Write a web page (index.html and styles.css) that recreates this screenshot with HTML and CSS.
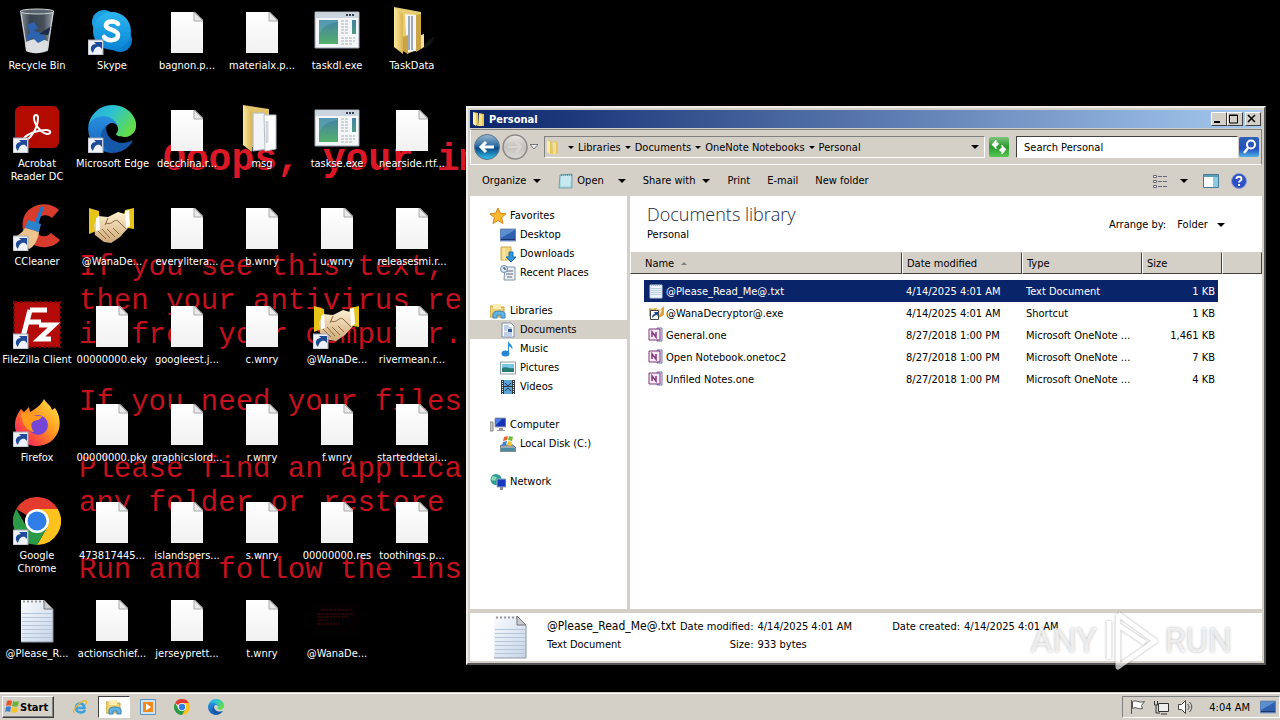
FILE: index.html
```
<!DOCTYPE html>
<html lang="en">
<head>
    <meta charset="UTF-8">
    <meta name="viewport" content="width=device-width, initial-scale=1.0">
    <title>Personal</title>
    <link rel="stylesheet" href="styles.css">
</head>
<body>
    <!-- Icon sprite -->
    <svg class="sprite" aria-hidden="true">
        <defs>
            <linearGradient id="gPage" x1="0" y1="0" x2="0" y2="1"><stop offset="0" stop-color="#fff"/><stop offset="1" stop-color="#f1f1f1"/></linearGradient>
            <linearGradient id="gNote" x1="0" y1="0" x2="1" y2="1"><stop offset="0" stop-color="#fafcff"/><stop offset="1" stop-color="#c6d3e6"/></linearGradient>
            <linearGradient id="gSkype" x1="0" y1="0" x2="0" y2="1"><stop offset="0" stop-color="#2cb6ee"/><stop offset="1" stop-color="#0a84d6"/></linearGradient>
            <linearGradient id="gEdgeTop" x1="0" y1="0" x2="1" y2="0.5"><stop offset="0" stop-color="#2ba5e0"/><stop offset="0.5" stop-color="#2cc3cf"/><stop offset="1" stop-color="#62dc4c"/></linearGradient>
            <linearGradient id="gEdgeLow" x1="0" y1="0" x2="0" y2="1"><stop offset="0" stop-color="#2a92e2"/><stop offset="1" stop-color="#1560b8"/></linearGradient>
            <linearGradient id="gFox" x1="1" y1="0" x2="0" y2="1"><stop offset="0" stop-color="#fff14a"/><stop offset="0.45" stop-color="#ff9320"/><stop offset="0.75" stop-color="#ff4046"/><stop offset="1" stop-color="#e3128c"/></linearGradient>
            <linearGradient id="gFolder" x1="0" y1="0" x2="1" y2="0"><stop offset="0" stop-color="#fbeaa0"/><stop offset="1" stop-color="#d9b451"/></linearGradient>
            <linearGradient id="gApp" x1="0" y1="0" x2="0" y2="1"><stop offset="0" stop-color="#4280a8"/><stop offset="1" stop-color="#55b06a"/></linearGradient>
            <linearGradient id="gBin" x1="0" y1="0" x2="1" y2="0"><stop offset="0" stop-color="#8d959c"/><stop offset="0.3" stop-color="#39434e"/><stop offset="0.7" stop-color="#46505b"/><stop offset="1" stop-color="#a5adb3"/></linearGradient>
            <linearGradient id="gNav" x1="0" y1="0" x2="0" y2="1"><stop offset="0" stop-color="#9bb9cf"/><stop offset="0.45" stop-color="#2b6da5"/><stop offset="0.55" stop-color="#0a4a86"/><stop offset="1" stop-color="#35c4ee"/></linearGradient>
            <linearGradient id="gNavOff" x1="0" y1="0" x2="0" y2="1"><stop offset="0" stop-color="#e8e6e2"/><stop offset="0.5" stop-color="#c4c1bc"/><stop offset="1" stop-color="#dedcd8"/></linearGradient>
            <linearGradient id="gHand" x1="0" y1="0" x2="0" y2="1"><stop offset="0" stop-color="#fdf0d0"/><stop offset="1" stop-color="#cfa878"/></linearGradient>
            <linearGradient id="gBlue" x1="0" y1="0" x2="0" y2="1"><stop offset="0" stop-color="#2e62b4"/><stop offset="0.6" stop-color="#2350c0"/><stop offset="1" stop-color="#4fb2e6"/></linearGradient>
            <linearGradient id="gGreen" x1="0" y1="0" x2="0" y2="1"><stop offset="0" stop-color="#7cc67a"/><stop offset="0.5" stop-color="#2a9a30"/><stop offset="1" stop-color="#56c850"/></linearGradient>
        </defs>
        <symbol id="file" viewBox="0 0 48 48">
            <path d="M8 5h24l8 8v33H8z" fill="url(#gPage)"/>
            <path d="M31 5v9h9z" fill="#e9e9e9" stroke="#a9a9a9"/>
        </symbol>
        <symbol id="note" viewBox="0 0 48 48">
            <path d="M8 5h23l9 9v33H8z" fill="url(#gNote)"/>
            <path d="M9 18.500h30M9 22.500h30M9 26.500h30M9 30.500h30M9 34.500h30M9 38.500h30M9 42.500h30" stroke="#b3c6dc"/>
            <path d="M10 6.500h22" stroke="#999" stroke-width="2" stroke-dasharray="2 2"/>
            <path d="M31 5v9h9z" fill="#c8ccd2" stroke="#777"/>
            <path d="M8 47h32V14" fill="none" stroke="#8d97a5"/>
        </symbol>
        <symbol id="link" viewBox="0 0 48 48">
            <path d="M0 33h15v15H0z" fill="#eef2f8" stroke="#a3a9b4"/>
            <path d="M5 46c-4-4-2-9 3-9L6 35h8v7l-2-2c-4-1-6 2-7 6z" fill="#1d4b98"/>
        </symbol>
        <symbol id="bin" viewBox="0 0 48 48">
            <path d="M7 4h34l-6 40c-6 3-16 3-22 0z" fill="url(#gBin)"/>
            <path d="M12 36c5-5 18-5 24-1l-1 8c-6 4-16 4-22 1z" fill="#dcdedf"/>
            <path d="M14 18l7-3 4 6-4 3 8 2 4 6-8 4-5-5-5 3-2-5 4-3z" fill="#2d62b0"/>
            <path d="M26 27l14-9-5 10z" fill="#1a2a48"/>
            <ellipse cx="24" cy="4.500" rx="17" ry="2.500" fill="#5c656d" stroke="#cfd4d8"/>
            <path d="M8 6l6 38M40 6l-6 38" stroke="#d5d9dc" fill="none"/>
        </symbol>
        <symbol id="skype" viewBox="0 0 48 48">
            <circle cx="16" cy="15" r="12" fill="#1d9fe4"/><circle cx="32" cy="33" r="12" fill="#0a7fd0"/>
            <circle cx="24" cy="24" r="19" fill="url(#gSkype)"/>
            <path d="M30 17c-2-3-11-4-12 1s12 4 12 10-10 7-14 2" fill="none" stroke="#fff" stroke-width="4.500" stroke-linecap="round"/>
        </symbol>
        <symbol id="edge" viewBox="4 5 256 256">
            <path d="M235.700 195.500a94 94 0 0 1-10.500 4.700 102 102 0 0 1-35.900 6.500c-47.300 0-88.500-32.600-88.500-74.300A31.500 31.500 0 0 1 117.100 105c-42.800 1.800-53.800 46.400-53.800 72.500 0 73.900 68 81.400 82.800 81.400 7.900 0 19.800-2.300 27-4.600l1.300-.4a128 128 0 0 0 66.600-52.800 4 4 0 0 0-5.300-5.600z" fill="#1557a8"/>
            <path d="M110.300 246.300A79 79 0 0 1 87.600 225a80.700 80.700 0 0 1 29.500-120c3.100-1.500 8.500-4.100 15.500-4a32.400 32.400 0 0 1 25.700 13 31.900 31.900 0 0 1 6.400 18.700c0-.2 24.500-79.600-80-79.600-43.900 0-80 41.700-80 78.200a130 130 0 0 0 12.100 56 128 128 0 0 0 156.400 67.100 75.600 75.600 0 0 1-62.800-8z" fill="url(#gEdgeLow)"/>
            <path d="M156.900 153.800c-.8 1-3.300 2.500-3.300 5.600 0 2.600 1.700 5.100 4.700 7.200 14.400 10 41.500 8.700 41.600 8.700a59.600 59.600 0 0 0 30.300-8.300 61.400 61.400 0 0 0 30.400-52.900c.3-22.400-8-37.300-11.300-43.900C228.100 28.800 182.400 5 132.600 5a128 128 0 0 0-128 126.200c.5-36.500 36.800-66 80-66 3.500 0 23.500.3 42 10 16.300 8.600 24.900 19 30.900 29.200 6.200 10.700 7.300 24.200 7.300 29.500s-2.700 13.300-7.900 19.900z" fill="url(#gEdgeTop)"/>
        </symbol>
        <symbol id="acrobat" viewBox="0 0 48 48">
            <rect x="2" y="1" width="44" height="42" rx="6" fill="#b30b00"/>
            <path d="M12 35c5 0 13-12 13-22 0-4-4-4-4 0 0 6 7 15 13 16 5 0 4-4-1-4-7 0-17 3-21 7-2 2-2 3 0 3z" fill="none" stroke="#fff" stroke-width="2"/>
        </symbol>
        <symbol id="ccleaner" viewBox="0 0 48 48">
            <path d="M46 7C36-3 14 0 10 17c-3 18 10 29 24 27 6-1 10-3 13-7l-9-7c-7 7-17 2-16-8 1-9 11-13 17-7z" fill="#d63b2c"/>
            <path d="M28 3l3 1-6 18-4-1z" fill="#1f78c8"/><path d="M15 17l13 4-2 8-14-4z" fill="#2a83cc"/>
            <path d="M12 25l14 4c-1 8-5 15-10 17L0 34c5-1 9-4 12-9z" fill="#ecc58e"/>
        </symbol>
        <symbol id="filezilla" viewBox="0 0 48 48">
            <path d="M1 1h46v45H1z" fill="#b50a0a" stroke="#7a0505" stroke-width="2" stroke-dasharray="3 2"/>
            <path d="M17 9h17M15 21h13M17 9l-7 27M26 24h15L26 38h12" fill="none" stroke="#fff" stroke-width="5"/>
        </symbol>
        <symbol id="firefox" viewBox="0 0 48 48">
            <path d="M31 0c2 4 7 6 8 11l3-2c5 7 6 17 3 24-4 9-12 14-21 14C11 47 2 38 2 26c0-7 3-12 6-16l3 3 5-5 1 5C26 8 29 4 31 0z" fill="url(#gFox)"/>
            <circle cx="25" cy="26" r="10" fill="#7446d8"/><path d="M8 15c6-3 11-1 14 2h7c-1 4-5 4-8 5-4 2-3 7 0 11-7-1-12-7-13-18z" fill="#ff9a1e"/>
        </symbol>
        <symbol id="chrome" viewBox="0 0 48 48">
            <path d="M24 24L3.200 12a24 24 0 0 1 41.600 0z" fill="#e33b2e"/>
            <path d="M24 12h20.800A24 24 0 0 1 24 48l10.400-18z" fill="#fcc31e"/>
            <path d="M3.200 12A24 24 0 0 0 24 48l10.400-18L24 24 13.600 30z" fill="#2b9a47"/>
            <circle cx="24" cy="24" r="12" fill="#fff"/><circle cx="24" cy="24" r="9.500" fill="#2f7de6"/>
        </symbol>
        <symbol id="hands" viewBox="0 0 48 48">
            <path d="M1 5l10 3 1 18-6 3-5 2zM46 5l-9 2-3 15 6 3 6 1z" fill="#e6c418"/>
            <path d="M10 13l10 1 10-5 7 2 3 14-8 9-9 6-7-1-9-7-1-10z" fill="url(#gHand)"/>
            <path d="M37 8l4-1 1 16-4 2zM8 15l3-1 1 13-4 1z" fill="#fff"/>
            <path d="M18 20c6 3 8-5 12-2l8 8M20 15l-3 7M10 28l8 8M14 26l8 9M19 26l8 8M25 25l6 6" fill="none" stroke="#8a6840"/>
        </symbol>
        <symbol id="app" viewBox="0 0 48 48">
            <path d="M2 5h44v36H2z" fill="#f4f6f8" stroke="#9aa6b2"/><path d="M3 6h42v5H3z" fill="#cbd5df"/>
            <path d="M33 8h9" stroke="#34424f" stroke-width="2" stroke-dasharray="2 1"/>
            <path d="M6 13h19v24H6zM39 13h4v14h-4z" fill="url(#gApp)"/><path d="M6 28C9 19 17 16 25 15v-2H6z" fill="#6ab0c0" opacity=".5"/>
            <path d="M28 14h8M28 17h8M28 20h8M28 23h8M28 26h8M28 31h14M28 34h14M28 37h12" stroke="#a9b0b6" stroke-dasharray="3 1"/>
        </symbol>
        <symbol id="folderFull" viewBox="0 0 48 48">
            <path d="M6 0l27 5v36l-14 6z" fill="#e8cd75"/><path d="M17 7l11 1v36l-9 1z" fill="#f6f6f6"/><path d="M21 9v34M24 9v34" stroke="#9cabc0" stroke-width="2"/>
            <path d="M6 0l9 7v40L6 40z" fill="url(#gFolder)"/><path d="M15 30l5-2v19l-5-3zM28 8l5-1v35l-5 3z" fill="#caa447"/><path d="M33 28l3-1v13l-3 2z" fill="#f4dfa0"/>
            <path d="M36 37l11-8-4 8-7 5z" fill="#222" opacity=".6"/>
        </symbol>
        <symbol id="folderDocs" viewBox="0 0 48 48">
            <path d="M5 0l26 4v38H14z" fill="#e2c56b"/><path d="M15 8h11l4 5v31l-15 2z" fill="#f2f4f8" stroke="#aab2c0"/>
            <path d="M26 10h12v34l-11 2z" fill="#fff" stroke="#b7bec9"/><path d="M29 16v22" stroke="#d2d7de" stroke-width="3"/>
            <path d="M5 0l9 7v40l-9-7z" fill="url(#gFolder)"/>
        </symbol>
        <symbol id="bmp" viewBox="0 0 48 48">
            <path d="M0 8h48v31H0z" fill="#020000"/>
            <path d="M8 15h30M4 19h36M4 22h32M4 25h10M4 29h24" stroke="#4a060a" stroke-dasharray="4 1 2 1"/>
        </symbol>

        <!-- 16px set -->
        <symbol id="folder" viewBox="0 0 16 16">
            <path d="M2 1l5 1v13l-5-2zM8 2l5 1v12H7z" fill="#e6c75a"/><path d="M2 1l3 2v12l-3-2z" fill="#fbeca8"/><path d="M8 3l3 1v11H8z" fill="#f8e08a"/>
        </symbol>
        <symbol id="star" viewBox="0 0 16 16"><path d="M8 0l2.400 5.300 5.600.5-4.300 3.700 1.300 6L8 12.400 3 15.500l1.300-6L0 5.800l5.600-.5z" fill="#f8b830" stroke="#d98418"/></symbol>
        <symbol id="desk" viewBox="0 0 16 16"><path d="M0 2h16v12H0z" fill="#2f60b0" stroke="#8ba0bd"/><path d="M1 3h14L1 11z" fill="#5b8fd0"/><path d="M1 12h14v1H1z" fill="#17356f"/></symbol>
        <symbol id="down" viewBox="0 0 16 16"><path d="M1 1h10v13H1z" fill="#f3d984" stroke="#c9a348"/><path d="M4 2v13" stroke="#fff3bd"/><path d="M9 6h4v5h3l-5 5-5-5h3z" fill="#3296de" stroke="#1b6db0"/></symbol>
        <symbol id="recent" viewBox="0 0 16 16"><path d="M5 2h10v13H4z" fill="#e9edf1" stroke="#8295a8"/><path d="M6 6h7M6 9h7M7 12h5" stroke="#668"/><circle cx="4" cy="4" r="3.500" fill="#dbeaf8" stroke="#6b88a5"/><path d="M4 2v2h2" fill="none" stroke="#334"/></symbol>
        <symbol id="libs" viewBox="0 0 16 16"><path d="M0 3h6l1 1h7v10H0z" fill="#f0d070" stroke="#c5a045"/><path d="M3 1h8v5H3z" fill="#fbeeb0"/><path d="M3 15v-4c0-4 12-4 12 0v4h-4v-3H7v3z" fill="#62b4e2" stroke="#3885b8"/></symbol>
        <symbol id="doc" viewBox="0 0 16 16"><path d="M2 1h9l3 3v11H2z" fill="#fff" stroke="#7b8eaa"/><path d="M4 4h5M4 6h8M4 8h3M4 11h8M4 13h8" stroke="#7aa0d0"/><path d="M8 7h4v3H8z" fill="#315d9c"/></symbol>
        <symbol id="music" viewBox="0 0 16 16"><ellipse cx="5.500" cy="12.500" rx="4" ry="3" fill="#2586d2"/><path d="M8 13V0c1 3 6 4 4 9 0-3-2-3-3-4v8z" fill="#2a90da"/></symbol>
        <symbol id="pic" viewBox="0 0 16 16"><path d="M.5 2h15v12H.5z" fill="#fff" stroke="#8c9cac"/><path d="M2 4h12v8H2z" fill="#7dc4ea"/><path d="M2 8c4-2 7 1 12 0v4H2z" fill="#287c70"/></symbol>
        <symbol id="video" viewBox="0 0 16 16"><path d="M1 1h14v14H1z" fill="#303840"/><path d="M4 1h8v6H4zM4 8h8v7H4z" fill="#5aa5d8"/><path d="M5 4l3 3 3-3M5 12l3-3 3 3" stroke="#235" fill="none"/><path d="M2.500 2v13M13.500 2v13" stroke="#fff" stroke-dasharray="1 1"/></symbol>
        <symbol id="pc" viewBox="0 0 16 16"><path d="M5 1h11v9H5z" fill="#1733b4" stroke="#a5acb5"/><path d="M6 2h6L6 8z" fill="#4f7de8"/><path d="M9 11h4v2h2v1H7v-1h2z" fill="#999"/><path d="M0 5h3v9H0z" fill="#c7c7c4" stroke="#888"/></symbol>
        <symbol id="disk" viewBox="0 0 16 16"><path d="M1 9h12l3 3v4H0v-5z" fill="#9da9ae" stroke="#67767e"/><path d="M1 12h14v3H1z" fill="#4a8ba0"/><path d="M4 1l4-1-1 4-4 1z" fill="#e8622a"/><path d="M9 0l4 1-1 4-4-1z" fill="#74b83a"/><path d="M3 6l4-1-1 4-4 1z" fill="#3d82d6"/><path d="M8 5l4 1-1 4-4-1z" fill="#f4c430"/></symbol>
        <symbol id="net" viewBox="0 0 16 16"><circle cx="6" cy="5.500" r="5.500" fill="#289d95"/><path d="M2 2l5 1-2 4-4-1z" fill="#8ad4b8"/><path d="M7 5h9v8H7z" fill="#1738c0" stroke="#9ab"/><path d="M10 13h3v3h-3z" fill="#889"/></symbol>
        <symbol id="one" viewBox="0 0 16 16"><path d="M9 1h5v13H9z" fill="#e8e1f2" stroke="#6e7fb0"/><path d="M1 2h11v11H1z" fill="#f6e9f6" stroke="#80397b"/><path d="M4 10V5l4 5V5" fill="none" stroke="#80397b" stroke-width="1.500"/></symbol>
        <symbol id="pad" viewBox="0 0 16 16"><path d="M2 2l12-1v14H1z" fill="#a9dbe4" stroke="#7b9fa8"/><path d="M3 4h10M3 6h10M3 8h10M3 10h9M3 12h9" stroke="#e5f6f8"/><path d="M3 2h11" stroke="#456" stroke-dasharray="1 1"/></symbol>
        <symbol id="padfile" viewBox="0 0 16 16"><path d="M2 2h12v13H2z" fill="#eef5fb" stroke="#b9c8d6"/><path d="M3 5.500h10M3 7.500h10M3 9.500h10M3 11.500h10" stroke="#b4cbe0"/><path d="M3 2h10" stroke="#7b8a99" stroke-dasharray="1 1"/></symbol>
        <symbol id="refresh" viewBox="0 0 20 20"><rect width="20" height="20" rx="2" fill="url(#gGreen)"/><path d="M3 8l4-5v3h2v2H7v4M17 12l-4 5v-3h-2v-2h2V8" fill="#fff" stroke="#fff"/></symbol>
        <symbol id="find" viewBox="0 0 20 20"><rect width="20" height="20" rx="2" fill="url(#gBlue)"/><circle cx="12" cy="7.500" r="4" fill="none" stroke="#fff" stroke-width="2"/><path d="M9 11l-4 5" stroke="#fff" stroke-width="2.500"/></symbol>
        <symbol id="view" viewBox="0 0 16 16"><path d="M1.500 2.500h3v2h-3zM1.500 7.500h3v2h-3zM1.500 12.500h3v2h-3z" fill="#fff" stroke="#667"/><path d="M6 3.500h9M6 8.500h9M6 13.500h9" stroke="#667" stroke-dasharray="4 1"/></symbol>
        <symbol id="pane" viewBox="0 0 16 16"><path d="M.5 1.500h15v13H.5z" fill="#fff" stroke="#477c96"/><path d="M1 2h14v2H1z" fill="#5d9db8"/><path d="M10 4h5v10h-5z" fill="#8ecbe0"/></symbol>
        <symbol id="help" viewBox="0 0 16 16"><circle cx="8" cy="8" r="7.500" fill="#2d50c4" stroke="#8b9ed0"/><path d="M5.500 6c0-3 5-3 5 0 0 2-2.500 1.500-2.500 3.500M8 11v2" stroke="#fff" stroke-width="2" fill="none"/></symbol>
        <symbol id="ie" viewBox="0 0 16 16"><path d="M13 11c-2 4-9 3-9-2.500S12 3 12.500 9H5" fill="none" stroke="#3ba1e0" stroke-width="2.500"/><path d="M2 14C-1 12 10 0 14 2c1 1 0 3-1 4" fill="none" stroke="#e6b830" stroke-width="1.300"/></symbol>
        <symbol id="wmp" viewBox="0 0 16 16"><path d="M.5.5h15v15H.5z" fill="#cfe3f4" stroke="#5b94c4"/><path d="M3 3h10v10H3z" fill="#f08a1c"/><path d="M6 4.500L11 8l-5 3.500z" fill="#fff"/></symbol>
        <symbol id="flag" viewBox="0 0 16 16"><path d="M2.500 1v14" stroke="#555"/><path d="M3.500 2.500c4-2 6 2 12 0l-3 4 1 3c-5 1-6-2-10 0z" fill="#fff" stroke="#555"/></symbol>
        <symbol id="lan" viewBox="0 0 16 16"><path d="M5.500 4.500h10v8h-10z" fill="#eee" stroke="#333"/><path d="M8 15h6M1.500 2v4h3V2M3 6v8h4" fill="none" stroke="#333"/></symbol>
        <symbol id="sound" viewBox="0 0 16 16"><path d="M1.500 5.500h3l4-4v13l-4-4h-3z" fill="#fff" stroke="#444"/><path d="M10.500 5c2 2 2 4 0 6M12.500 3c3 3 3 7 0 10" fill="none" stroke="#444"/></symbol>
        <symbol id="winlogo" viewBox="0 0 16 16"><path d="M3 2c2-1 3-1 5 0L7 7c-2-1-3-1-5 0z" fill="#e8532a"/><path d="M9 2c2 1 4 1 6 0l-1 5c-2 1-4 1-6 0z" fill="#6db33a"/><path d="M2 8c2-1 3-1 5 0l-1 5c-2-1-4-1-5 0z" fill="#3a7fd0"/><path d="M8 8c2 1 4 1 6 0l-1 5c-2 1-4 1-6 0z" fill="#f5c32a"/></symbol>
    </svg>

    <main class="desktop">
        <div class="wallpaper">
            <h1>Ooops, your im</h1>
            <p>If you see this text,<br>then your antivirus re<br>it from your computer.</p>
            <p>If you need your files</p>
            <p>Please find an applica<br>any folder or restore</p>
            <p>Run and follow the ins</p>
        </div>

        <div class="icons">
            <button><svg><use href="#bin"/></svg>Recycle Bin</button>
            <button><svg><use href="#acrobat"/><use href="#link"/></svg>Acrobat<br>Reader DC</button>
            <button><svg><use href="#ccleaner"/><use href="#link"/></svg>CCleaner</button>
            <button><svg><use href="#filezilla"/><use href="#link"/></svg>FileZilla Client</button>
            <button><svg><use href="#firefox"/><use href="#link"/></svg>Firefox</button>
            <button><svg><use href="#chrome"/><use href="#link"/></svg>Google<br>Chrome</button>
            <button><svg><use href="#note"/></svg>@Please_R...</button>

            <button><svg><use href="#skype"/><use href="#link"/></svg>Skype</button>
            <button><svg><use href="#edge"/><use href="#link"/></svg>Microsoft Edge</button>
            <button><svg><use href="#hands"/></svg>@WanaDe...</button>
            <button><svg><use href="#file"/></svg>00000000.eky</button>
            <button><svg><use href="#file"/></svg>00000000.pky</button>
            <button><svg><use href="#file"/></svg>473817445...</button>
            <button><svg><use href="#file"/></svg>actionschief...</button>

            <button><svg><use href="#file"/></svg>bagnon.p...</button>
            <button><svg><use href="#file"/></svg>decchina.r...</button>
            <button><svg><use href="#file"/></svg>everylitera...</button>
            <button><svg><use href="#file"/></svg>googleest.j...</button>
            <button><svg><use href="#file"/></svg>graphicslord...</button>
            <button><svg><use href="#file"/></svg>islandspers...</button>
            <button><svg><use href="#file"/></svg>jerseyprett...</button>

            <button><svg><use href="#file"/></svg>materialx.p...</button>
            <button><svg><use href="#folderDocs"/></svg>msg</button>
            <button><svg><use href="#file"/></svg>b.wnry</button>
            <button><svg><use href="#file"/></svg>c.wnry</button>
            <button><svg><use href="#file"/></svg>r.wnry</button>
            <button><svg><use href="#file"/></svg>s.wnry</button>
            <button><svg><use href="#file"/></svg>t.wnry</button>

            <button><svg><use href="#app"/></svg>taskdl.exe</button>
            <button><svg><use href="#app"/></svg>taskse.exe</button>
            <button><svg><use href="#file"/></svg>u.wnry</button>
            <button><svg><use href="#hands"/><use href="#link"/></svg>@WanaDe...</button>
            <button><svg><use href="#file"/></svg>f.wnry</button>
            <button><svg><use href="#file"/></svg>00000000.res</button>
            <button><svg><use href="#bmp"/></svg>@WanaDe...</button>

            <button><svg><use href="#folderFull"/></svg>TaskData</button>
            <button><svg><use href="#file"/></svg>nearside.rtf...</button>
            <button><svg><use href="#file"/></svg>releasesmi.r...</button>
            <button><svg><use href="#file"/></svg>rivermean.r...</button>
            <button><svg><use href="#file"/></svg>starteddetai...</button>
            <button><svg><use href="#file"/></svg>toothings.p...</button>
        </div>

        <section class="window">
            <header class="titlebar">
                <svg class="i16"><use href="#folder"/></svg>
                <span class="title">Personal</span>
                <button class="caption" aria-label="Minimize"><svg viewBox="0 0 12 10"><path d="M2 8h6" stroke="#000" stroke-width="2"/></svg></button>
                <button class="caption" aria-label="Maximize"><svg viewBox="0 0 12 10"><path d="M1.500 1h8v8h-8zM1 1.500h9" fill="none" stroke="#000"/></svg></button>
                <button class="caption close" aria-label="Close"><svg viewBox="0 0 12 10"><path d="M2 1l7 7M9 1L2 8" stroke="#000" stroke-width="1.500"/></svg></button>
            </header>

            <nav class="navbar">
                <div class="travel">
                    <button aria-label="Back"><svg viewBox="0 0 26 26"><circle cx="13" cy="13" r="12.500" fill="url(#gNav)" stroke="#5d7488"/><path d="M20 13H8M12 8l-5 5 5 5" fill="none" stroke="#fff" stroke-width="3"/></svg></button>
                    <button aria-label="Forward"><svg viewBox="0 0 26 26"><circle cx="13" cy="13" r="12" fill="url(#gNavOff)" stroke="#8c8a86" stroke-width="1.500"/><path d="M6 13h12M14 8l5 5-5 5" fill="none" stroke="#dad7d2" stroke-width="2"/></svg></button>
                    <button class="history" aria-label="Recent pages"><svg viewBox="0 0 8 6"><path d="M0 .5h8L4 5z" fill="#eee" stroke="#777"/></svg></button>
                </div>
                <div class="address">
                    <svg class="i16"><use href="#folder"/></svg>
                    <i class="caret"></i><button>Libraries</button>
                    <i class="caret"></i><button>Documents</button>
                    <i class="caret"></i><button>OneNote Notebooks</button>
                    <i class="caret"></i><button>Personal</button>
                    <i class="caret big end"></i>
                </div>
                <button class="go" aria-label="Refresh"><svg><use href="#refresh"/></svg></button>
                <input class="search" type="text" placeholder="Search Personal" aria-label="Search Personal">
                <button class="go find" aria-label="Search"><svg><use href="#find"/></svg></button>
            </nav>

            <div class="toolbar">
                <button>Organize <i class="caret big"></i></button>
                <button class="open"><svg class="i16"><use href="#pad"/></svg>Open <i class="caret big"></i></button>
                <button>Share with <i class="caret big"></i></button>
                <button>Print</button>
                <button>E-mail</button>
                <button>New folder</button>
                <div class="tools">
                    <button aria-label="Change view"><svg class="i16"><use href="#view"/></svg><i class="caret big"></i></button>
                    <button aria-label="Preview pane"><svg class="i16"><use href="#pane"/></svg></button>
                    <button aria-label="Help"><svg class="i16"><use href="#help"/></svg></button>
                </div>
            </div>

            <div class="content">
                <aside class="tree">
                    <div class="group">
                        <a href="#"><svg class="i16"><use href="#star"/></svg>Favorites</a>
                        <a href="#" class="child"><svg class="i16"><use href="#desk"/></svg>Desktop</a>
                        <a href="#" class="child"><svg class="i16"><use href="#down"/></svg>Downloads</a>
                        <a href="#" class="child"><svg class="i16"><use href="#recent"/></svg>Recent Places</a>
                    </div>
                    <div class="group">
                        <a href="#"><svg class="i16"><use href="#libs"/></svg>Libraries</a>
                        <a href="#" class="child current"><svg class="i16"><use href="#doc"/></svg>Documents</a>
                        <a href="#" class="child"><svg class="i16"><use href="#music"/></svg>Music</a>
                        <a href="#" class="child"><svg class="i16"><use href="#pic"/></svg>Pictures</a>
                        <a href="#" class="child"><svg class="i16"><use href="#video"/></svg>Videos</a>
                    </div>
                    <div class="group">
                        <a href="#"><svg class="i16"><use href="#pc"/></svg>Computer</a>
                        <a href="#" class="child"><svg class="i16"><use href="#disk"/></svg>Local Disk (C:)</a>
                    </div>
                    <div class="group">
                        <a href="#"><svg class="i16"><use href="#net"/></svg>Network</a>
                    </div>
                </aside>

                <div class="list">
                    <div class="library">
                        <div class="heading">
                            <h2>Documents library</h2>
                            <p>Personal</p>
                        </div>
                        <div class="arrange">Arrange by: <button>Folder <i class="caret big"></i></button></div>
                    </div>
                    <table>
                        <thead>
                            <tr><th class="name">Name <i class="sort"></i></th><th class="date">Date modified</th><th class="type">Type</th><th class="size">Size</th><th></th></tr>
                        </thead>
                        <tbody>
                            <tr class="selected"><td><span><svg class="i16"><use href="#padfile"/></svg>@Please_Read_Me@.txt</span></td><td>4/14/2025 4:01 AM</td><td>Text Document</td><td>1 KB</td><td></td></tr>
                            <tr><td><span><svg class="i16" viewBox="0 0 16 16"><path d="M1 3l4 1 3-1 4 2 4-4v9l-5 3-4 1-6-3z" fill="#dba63a"/><path d="M8 4l6 1-2 5-4-1z" fill="#f3dfb4"/><path d="M2.500 5.500h8v9h-8z" fill="#fff" stroke="#444"/><path d="M4 13c0-3 1-4 3-4L6 7h4v4l-1-1c-2 0-3 1-5 3z" fill="#1d4b98"/></svg>@WanaDecryptor@.exe</span></td><td>4/14/2025 4:01 AM</td><td>Shortcut</td><td>1 KB</td><td></td></tr>
                            <tr><td><span><svg class="i16"><use href="#one"/></svg>General.one</span></td><td>8/27/2018 1:00 PM</td><td>Microsoft OneNote ...</td><td>1,461 KB</td><td></td></tr>
                            <tr><td><span><svg class="i16"><use href="#one"/></svg>Open Notebook.onetoc2</span></td><td>8/27/2018 1:00 PM</td><td>Microsoft OneNote ...</td><td>7 KB</td><td></td></tr>
                            <tr><td><span><svg class="i16"><use href="#one"/></svg>Unfiled Notes.one</span></td><td>8/27/2018 1:00 PM</td><td>Microsoft OneNote ...</td><td>4 KB</td><td></td></tr>
                        </tbody>
                    </table>
                </div>
            </div>

            <footer class="details">
                <svg class="thumb"><use href="#note"/></svg>
                <div class="facts">
                    <span class="filename">@Please_Read_Me@.txt</span><span class="label">Date modified:</span><span>4/14/2025 4:01 AM</span><span class="label">Date created:</span><span>4/14/2025 4:01 AM</span>
                    <span>Text Document</span><span class="label">Size:</span><span>933 bytes</span>
                </div>
            </footer>
        </section>

        <div class="watermark">
            <span>ANY</span>
            <svg viewBox="0 0 56 62"><path d="M15 5l37 27-37 26V5M15 16l27 18M6 12v38" fill="none" stroke="#fff" stroke-width="5" stroke-linejoin="round"/></svg>
            <span>RUN</span>
        </div>
    </main>

    <footer class="taskbar">
        <button class="start"><svg><use href="#winlogo"/></svg>Start</button>
        <div class="tasks">
            <button aria-label="Internet Explorer"><svg><use href="#ie"/></svg></button>
            <button class="active" aria-label="Windows Explorer"><svg><use href="#libs"/></svg></button>
            <button aria-label="Media Player"><svg><use href="#wmp"/></svg></button>
            <button aria-label="Google Chrome"><svg><use href="#chrome"/></svg></button>
            <button aria-label="Microsoft Edge"><svg><use href="#edge"/></svg></button>
        </div>
        <div class="tray">
            <svg class="i16"><use href="#flag"/></svg>
            <svg class="i16"><use href="#lan"/></svg>
            <svg class="i16"><use href="#sound"/></svg>
            <time>4:04 AM</time>
            <svg class="i16"><use href="#desk"/></svg>
        </div>
    </footer>
</body>
</html>
```
FILE: styles.css
```
* {
    box-sizing: border-box;
}

body {
    margin: 0;
    height: 100vh;
    display: flex;
    flex-direction: column;
    overflow: hidden;
    background: #000;
    color: #000;
    font: 11px/13px Tahoma, "DejaVu Sans Condensed", "DejaVu Sans", sans-serif;
}

h1, h2, p {
    margin: 0;
    font-weight: normal;
}

button {
    padding: 0;
    border: none;
    background: none;
    color: inherit;
    font: inherit;
    white-space: nowrap;
}

svg {
    flex: none;
}

.sprite {
    position: absolute;
    width: 0;
    height: 0;
}

.i16 {
    width: 16px;
    height: 16px;
}

.caret {
    flex: none;
    border: 3px solid transparent;
    border-top-color: #000;
    border-bottom: none;
}

.caret.big {
    border-width: 4px 4px 0;
}

/* Desktop */
.desktop {
    position: relative;
    flex: 1;
    min-height: 0;
}

.wallpaper {
    position: absolute;
    top: 138px;
    left: 79px;
    color: #c4111d;
    font: 29px/34px "Courier New", "Liberation Mono", monospace;
    white-space: nowrap;
}

.wallpaper h1 {
    padding-left: 84px;
    margin-bottom: 69px;
    color: #dc1826;
    font-size: 38px;
    font-weight: bold;
    line-height: 44px;
}

.wallpaper p {
    margin-bottom: 33px;
}

.icons {
    position: relative;
    display: grid;
    grid-auto-flow: column;
    grid-template-rows: repeat(7, 98px);
    grid-auto-columns: 72px;
    column-gap: 3px;
    padding-left: 1px;
    color: #fff;
}

.icons button {
    align-self: start;
    padding-top: 7px;
    text-shadow: 1px 1px 1px #000;
}

.icons svg {
    display: block;
    width: 48px;
    height: 48px;
    margin: 0 auto 4px;
}

/* Explorer window */
.window {
    position: absolute;
    top: 106px;
    left: 466px;
    display: flex;
    flex-direction: column;
    width: 800px;
    height: 559px;
    padding: 2px;
    background: #d4d0c8;
    border: 2px solid;
    border-color: #efedea #555 #555 #efedea;
}

.titlebar {
    display: flex;
    align-items: center;
    height: 18px;
    padding: 0 1px;
    background: linear-gradient(to right, #0a246a, #a6caf0);
    color: #fff;
    font-weight: bold;
}

.title {
    flex: 1;
    padding-left: 2px;
}

.caption {
    width: 16px;
    height: 14px;
    background: #d4d0c8;
    border: 1px solid;
    border-color: #fff #404040 #404040 #fff;
}

.caption svg {
    display: block;
    width: 12px;
    height: 10px;
}

.caption.close {
    margin-left: 2px;
}

.navbar {
    display: flex;
    align-items: center;
    height: 36px;
    margin-top: 1px;
    padding: 0 2px 0 3px;
    border: 1px solid;
    border-color: #808080 #808080 #fff #fff;
}

.travel {
    display: flex;
    align-items: center;
    gap: 2px;
}

.travel svg {
    display: block;
    width: 26px;
    height: 26px;
}

.travel .history svg {
    width: 8px;
    height: 6px;
}

.history {
    margin-right: 6px;
}

.address {
    display: flex;
    flex: 1;
    align-items: center;
    gap: 4px;
    height: 22px;
    padding-right: 5px;
    border: 1px solid;
    border-color: #808080 #fff #fff #808080;
}

.address .i16 {
    margin-right: 3px;
}

.address .end {
    margin-left: auto;
}

.go {
    margin: 0 7px 0 4px;
}

.go.find {
    margin: 0 0 0 1px;
}

.go svg {
    display: block;
    width: 20px;
    height: 20px;
}

.search {
    width: 222px;
    height: 22px;
    padding: 0 7px;
    border: 1px solid;
    border-color: #404040 #fff #fff #404040;
    font: inherit;
}

.search::placeholder {
    color: #000;
}

.toolbar {
    display: flex;
    align-items: center;
    gap: 17px;
    height: 31px;
    padding: 0 15px 0 12px;
}

.toolbar button {
    display: flex;
    align-items: center;
}

.toolbar .caret {
    margin-left: 7px;
}

.toolbar .open .caret {
    margin-left: 14px;
}

.toolbar .i16 {
    margin-right: 3px;
}

.tools {
    display: flex;
    gap: 12px;
    margin-left: auto;
}

.tools .i16 {
    margin: 0;
}

.toolbar .tools .caret {
    margin: 0 3px 0 12px;
}

.content {
    display: flex;
    flex: 1;
    min-height: 0;
    background: #fff;
}

.tree {
    width: 160px;
    padding-top: 10px;
    border-right: 3px solid #d4d0c8;
}

.group {
    margin-bottom: 19px;
}

.tree a {
    display: flex;
    align-items: center;
    gap: 4px;
    height: 19px;
    padding-left: 20px;
    color: #000;
    text-decoration: none;
}

.tree a.child {
    padding-left: 30px;
}

.tree a.current {
    background: #d4d0c8;
}

.list {
    flex: 1;
}

.library {
    display: flex;
    justify-content: space-between;
    align-items: center;
    height: 56px;
    padding: 0 37px 0 17px;
}

.heading {
    padding-bottom: 6px;
}

.library h2 {
    margin-bottom: 2px;
    color: #1b2a3c;
    font: 300 18px/24px "Open Sans", sans-serif;
}

.arrange button {
    margin-left: 8px;
}

.arrange .caret {
    display: inline-block;
    margin-left: 6px;
    vertical-align: middle;
}

table {
    width: 100%;
    table-layout: fixed;
    border-collapse: separate;
    border-spacing: 0;
}

th {
    height: 22px;
    padding: 0 4px;
    background: #d4d0c8;
    border: 1px solid;
    border-color: #d4d0c8 #404040 #404040 #fff;
    font-weight: normal;
    text-align: left;
}

th.name {
    width: 272px;
    padding-left: 14px;
}

th.date, th.type {
    width: 120px;
}

th.size {
    width: 80px;
}

.sort {
    display: inline-block;
    margin-left: 4px;
    border: 3px solid transparent;
    border-top: none;
    border-bottom-color: #808080;
    vertical-align: middle;
}

tbody::before {
    content: "";
    display: block;
    height: 6px;
}

td {
    height: 22px;
    padding: 0;
    text-indent: 4px;
}

td:first-child {
    padding-left: 14px;
    background-clip: content-box;
    text-indent: 0;
}

td:nth-child(4) {
    padding-right: 4px;
    background-clip: content-box;
    text-align: right;
}

td:nth-child(4)::after {
    content: "";
    padding-left: 3px;
}

td span {
    display: flex;
    align-items: center;
    gap: 2px;
    height: 22px;
    padding-left: 4px;
}

.selected {
    color: #fff;
}

.selected td:not(:last-child) {
    background-color: #0a246a;
}

.details {
    display: flex;
    align-items: center;
    gap: 13px;
    height: 52px;
    padding: 0 0 4px 16px;
    background: #fff;
    border-top: 4px solid #d4d0c8;
}

.thumb {
    width: 48px;
    height: 48px;
}

.facts {
    display: grid;
    grid-template-columns: 129px max-content max-content 104px max-content;
    gap: 5px 4px;
    white-space: nowrap;
}

.label {
    text-align: right;
}

.filename {
    font-size: 12px;
}

.watermark {
    position: absolute;
    top: 609px;
    right: 48px;
    display: flex;
    align-items: center;
    gap: 6px;
    color: rgba(255, 255, 255, 0.7);
    font: 34px/62px "Liberation Sans Narrow", "Roboto", sans-serif;
    text-shadow: 0 0 3px rgba(0, 0, 0, 0.3);
}

.watermark svg {
    width: 56px;
    height: 62px;
    opacity: 0.7;
    filter: drop-shadow(0 0 1px rgba(0, 0, 0, 0.5));
}

/* Taskbar */
.taskbar {
    display: flex;
    align-items: center;
    gap: 10px;
    height: 28px;
    padding: 2px 0 0 2px;
    background: #d4d0c8;
    box-shadow: inset 0 1px #d4d0c8, inset 0 2px #fff;
}

.start {
    display: flex;
    align-items: center;
    width: 52px;
    height: 22px;
    padding-left: 1px;
    border: 1px solid;
    border-color: #fff #404040 #404040 #fff;
    box-shadow: inset -1px -1px #808080;
    font-weight: bold;
}

.start svg {
    width: 16px;
    height: 16px;
}

.tasks {
    display: flex;
    flex: 1;
    gap: 2px;
}

.tasks button {
    display: flex;
    align-items: center;
    justify-content: center;
    width: 32px;
    height: 22px;
}

.tasks .active {
    background: #fff;
    border: 1px solid;
    border-color: #404040 #fff #fff #404040;
}

.tasks svg {
    width: 16px;
    height: 16px;
}

.tray {
    display: flex;
    align-items: center;
    gap: 8px;
    height: 22px;
    padding: 0 3px 0 6px;
    border: 1px solid;
    border-color: #808080 #fff #fff #808080;
}

.tray time {
    margin: 0 2px 0 8px;
}
```
